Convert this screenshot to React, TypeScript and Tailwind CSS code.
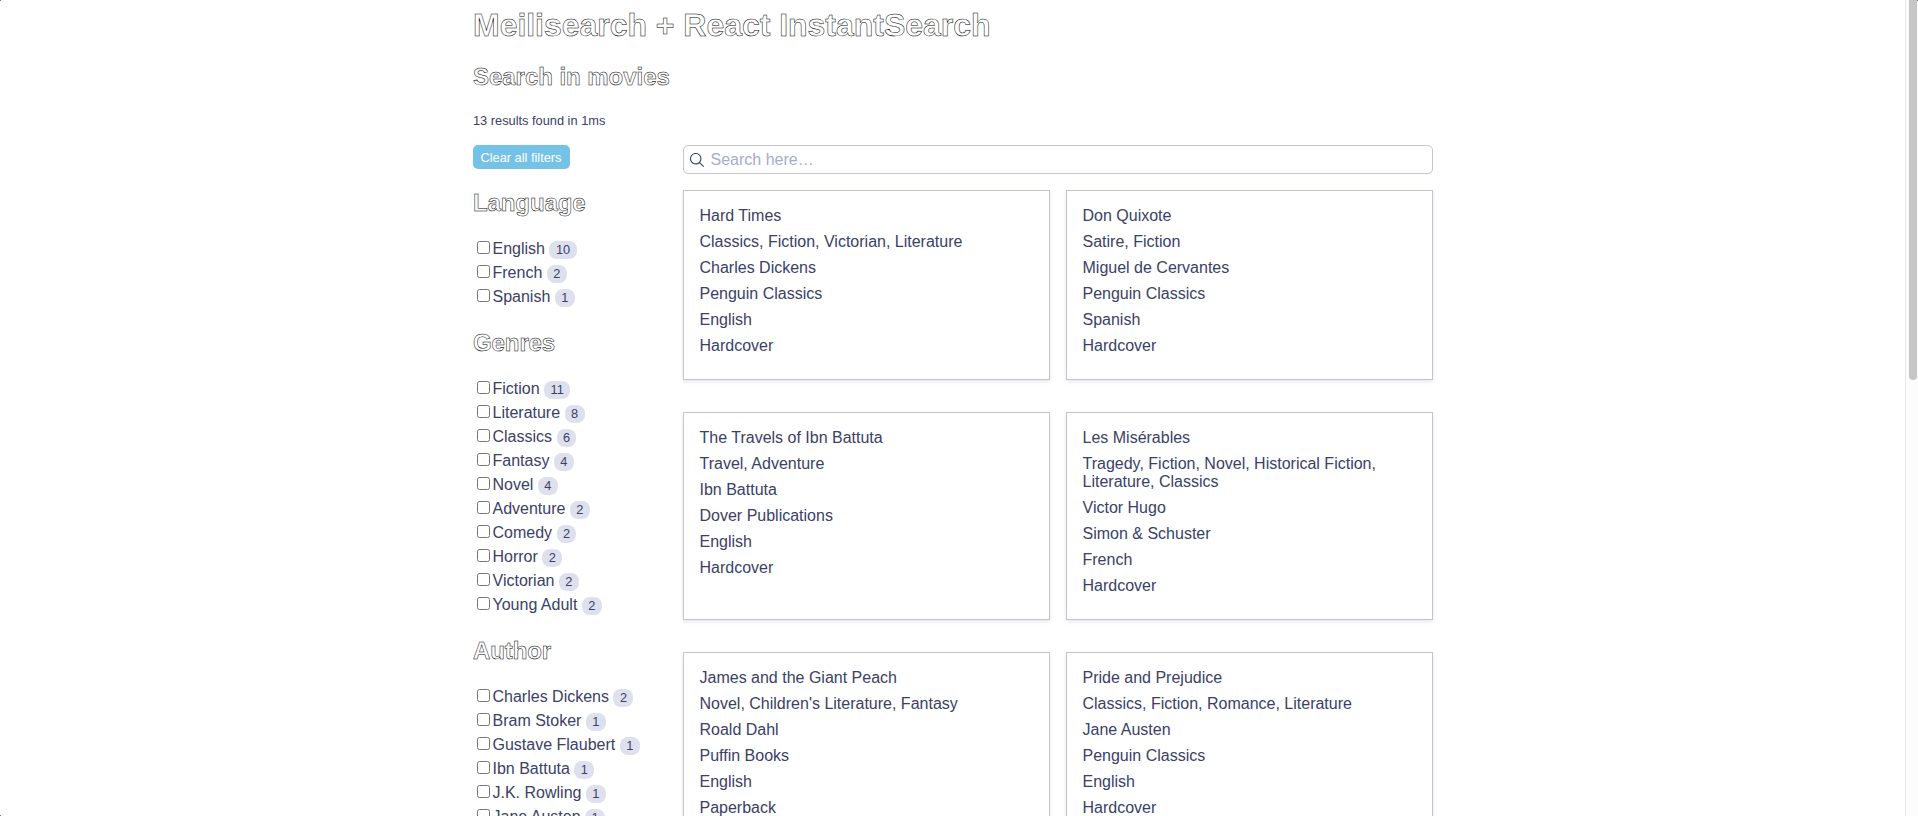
import { Fragment } from "react";

type Facet = { title: string; items: [string, number][] };

const facets: Facet[] = [
  { title: "Language", items: [["English", 10], ["French", 2], ["Spanish", 1]] },
  {
    title: "Genres",
    items: [
      ["Fiction", 11], ["Literature", 8], ["Classics", 6], ["Fantasy", 4], ["Novel", 4],
      ["Adventure", 2], ["Comedy", 2], ["Horror", 2], ["Victorian", 2], ["Young Adult", 2],
    ],
  },
  {
    title: "Author",
    items: [
      ["Charles Dickens", 2], ["Bram Stoker", 1], ["Gustave Flaubert", 1],
      ["Ibn Battuta", 1], ["J.K. Rowling", 1], ["Jane Austen", 1],
    ],
  },
];

const books: string[][] = [
  ["Hard Times", "Classics, Fiction, Victorian, Literature", "Charles Dickens", "Penguin Classics", "English", "Hardcover"],
  ["Don Quixote", "Satire, Fiction", "Miguel de Cervantes", "Penguin Classics", "Spanish", "Hardcover"],
  ["The Travels of Ibn Battuta", "Travel, Adventure", "Ibn Battuta", "Dover Publications", "English", "Hardcover"],
  ["Les Misérables", "Tragedy, Fiction, Novel, Historical Fiction, Literature, Classics", "Victor Hugo", "Simon & Schuster", "French", "Hardcover"],
  ["James and the Giant Peach", "Novel, Children's Literature, Fantasy", "Roald Dahl", "Puffin Books", "English", "Paperback"],
  ["Pride and Prejudice", "Classics, Fiction, Romance, Literature", "Jane Austen", "Penguin Classics", "English", "Hardcover"],
];

function FacetList({ title, items }: Facet) {
  return (
    <Fragment>
      <h2 className="h-7 text-2xl leading-7 font-bold tracking-[-0.1px] text-white [-webkit-text-stroke:0.5px_#000]">{title}</h2>
      <ul className="mt-[21px] mb-[19px]">
        {items.map(([name, count]) => (
          <li key={name} className="flex h-6 items-start">
            <input
              type="checkbox"
              className="mt-[3px] mr-[2.5px] ml-1 size-[13px] shrink-0 appearance-none rounded-[2.5px] border border-[#767676] bg-white"
            />
            <span className="whitespace-nowrap leading-[22px]">{name}</span>
            <span className="mt-[3px] ml-[4.5px] h-[18px] rounded-lg bg-[#dfe0ee] px-[6.4px] text-[12.8px] leading-[18px]">{count}</span>
          </li>
        ))}
      </ul>
    </Fragment>
  );
}

export default function App() {
  return (
    <div className="relative flex h-[816px] w-full overflow-hidden bg-white font-['Liberation_Sans',Arial,sans-serif] text-base text-[#3a4166]">
      <main className="flex min-w-0 flex-1 flex-col pl-[473px]">
        <h1 className="mt-[7px] h-9 text-[32px] leading-9 font-bold tracking-[-0.03px] text-white [-webkit-text-stroke:0.5px_#000]">
          Meilisearch + React InstantSearch
        </h1>
        <h2 className="mt-5 h-7 text-2xl leading-7 font-bold tracking-[-0.04px] text-white [-webkit-text-stroke:0.5px_#000]">Search in movies</h2>
        <div className="mt-[22px] h-4 text-[12.8px] leading-4">13 results found in 1ms</div>
        <div className="mt-4 flex w-[960px]">
          <aside className="w-[210px] shrink-0">
            <button className="mb-5 block h-6 w-[97px] rounded-[5px] bg-[#74c2e8] pr-px text-[12.8px] leading-[25px] whitespace-nowrap text-white">
              Clear all filters
            </button>
            {facets.map((f) => (
              <FacetList key={f.title} {...f} />
            ))}
          </aside>
          <section className="w-[750px]">
            <div className="flex h-[29px] items-center rounded-[5px] border border-[#c6c6cb] pl-1.5">
              <svg width="14" height="14" viewBox="0 0 40 40" className="mr-[6.5px] shrink-0 fill-[#3a4166]">
                <path d="M26.804 29.01c-2.832 2.34-6.465 3.746-10.426 3.746C7.333 32.756 0 25.424 0 16.378 0 7.333 7.333 0 16.378 0c9.046 0 16.378 7.333 16.378 16.378 0 3.96-1.406 7.594-3.746 10.426l10.534 10.534c.607.607.61 1.59-.004 2.202-.61.61-1.597.61-2.202.004L26.804 29.01zm-10.426.627c7.323 0 13.26-5.936 13.26-13.26 0-7.32-5.937-13.257-13.26-13.257C9.056 3.12 3.12 9.056 3.12 16.378c0 7.323 5.936 13.26 13.258 13.26z" />
              </svg>
              <span className="leading-[27px] text-[#a5adcd]">Search here…</span>
            </div>
            <div className="mt-4 grid grid-cols-2 gap-x-4 gap-y-8">
              {books.map((lines) => (
                <article
                  key={lines[0]}
                  className="border border-[#c4c4cf] pt-4 pr-4 pb-4 pl-[15.5px] shadow-[0_2px_4px_0_#e8e9ee]"
                >
                  {lines.map((line, i) => (
                    <div key={i} className="mb-2 leading-[18px]">{line}</div>
                  ))}
                </article>
              ))}
            </div>
          </section>
        </div>
      </main>
      <div className="flex w-[13px] shrink-0 items-start border-l border-[#e8e8e8] bg-[#fcfcfc] pl-[3px]">
        <div className="h-[380px] w-2 rounded-b bg-[#c6c6c6]" />
      </div>
      <div className="absolute top-0 left-0 size-px bg-[#777]" />
      <div className="absolute top-0 right-0 size-px bg-[#777]" />
      <div className="absolute bottom-0 left-0 size-px bg-[#777]" />
    </div>
  );
}
